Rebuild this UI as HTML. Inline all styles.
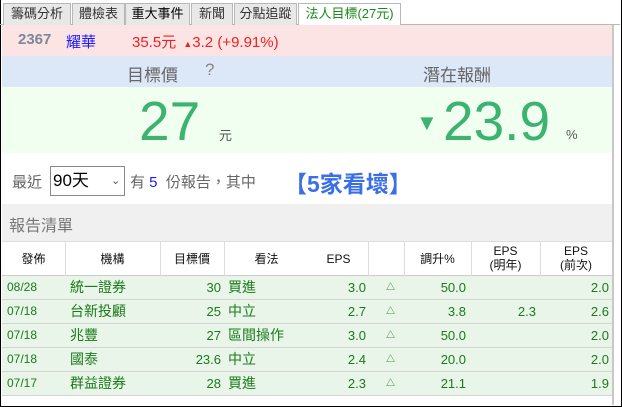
<!DOCTYPE html>
<html><head><meta charset="utf-8"><style>
*{margin:0;padding:0;box-sizing:border-box}
body{width:622px;height:407px;background:#fff;position:relative;overflow:hidden;font-family:"Liberation Sans","Noto Sans CJK TC",sans-serif}
.a{position:absolute;white-space:nowrap}
.tab{position:absolute;top:3px;height:22px;background:#e8e8e8;border:1px solid #b8b8b8;border-bottom:none;font-size:13px;color:#333;text-align:center;line-height:20px}
.r{position:absolute;left:2px;width:610px;height:24px;background:#eaf5ea;border-bottom:1px solid #d4d4d4;color:#1a7a1a}
.r span{position:absolute;top:0;line-height:23px;white-space:nowrap}
.d{font-size:12px;left:5px}
.n{font-size:13px;text-align:right}
.c{font-size:14px}
.h{position:absolute;font-size:12px;color:#111;text-align:center;line-height:14px}
.v{position:absolute;top:241px;width:1px;height:35px;background:#ddd}
</style></head><body>
<div class="a" style="left:0;top:0;width:622px;height:407px;border:1px solid #000;border-left:none;border-top:none"></div>
<div class="a" style="left:0;top:0;width:1px;height:407px;background:#000"></div>
<div class="a" style="left:612px;top:25px;width:2px;height:380px;background:#c8c8c8"></div>
<div class="a" style="left:0;top:24px;width:620px;height:1px;background:#b8b8b8"></div>
<div class="tab" style="left:3px;width:68px">籌碼分析</div>
<div class="tab" style="left:72px;width:53px">體檢表</div>
<div class="tab" style="left:125px;width:65px;color:#000">重大事件</div>
<div class="tab" style="left:191px;width:42px">新聞</div>
<div class="tab" style="left:234px;width:63px">分點追蹤</div>
<div class="tab" style="left:298px;width:103px;background:#fff;height:23px;color:#1a8a1a">法人目標(27元)</div>
<div class="a" style="left:2px;top:25px;width:610px;height:31px;background:#fde4e4"></div>
<div class="a" style="left:18px;top:31px;font-size:15px;color:#7a8898;font-weight:bold">2367</div>
<div class="a" style="left:66px;top:31px;font-size:15px;color:#1a1aff">耀華</div>
<div class="a" style="left:132px;top:31px;font-size:15px;color:#f02020">35.5元 <span style="font-size:9px;margin-left:3px">▲</span>3.2 (+9.91%)</div>
<div class="a" style="left:2px;top:56px;width:610px;height:31px;background:#dce8f8"></div>
<div class="a" style="left:127px;top:61px;font-size:17px;color:#666">目標價</div>
<div class="a" style="left:205px;top:60px;font-size:17px;color:#888">?</div>
<div class="a" style="left:423px;top:61px;font-size:17px;color:#666">潛在報酬</div>
<div class="a" style="left:2px;top:87px;width:610px;height:66px;background:#f0fff0"></div>
<div class="a" style="left:139px;top:89px;font-size:55px;color:#3cb371;line-height:64px">27</div>
<div class="a" style="left:219px;top:125px;font-size:13px;color:#555">元</div>
<div class="a" style="left:416px;top:112px;font-size:22px;color:#3cb371;line-height:22px">▼</div>
<div class="a" style="left:443px;top:89px;font-size:55px;color:#3cb371;line-height:64px">23.9</div>
<div class="a" style="left:566px;top:127px;font-size:13px;color:#555">%</div>
<div class="a" style="left:12px;top:171px;font-size:15px;color:#666">最近</div>
<div class="a" style="left:50px;top:166px;width:75px;height:30px;border:1px solid #888;background:#fff;font-size:17px;line-height:28px;padding-left:2px;color:#000">90天<span style="position:absolute;left:60px;top:0;font-size:11px;color:#555">⌄</span></div>
<div class="a" style="left:130px;top:171px;font-size:15px;color:#666">有 <span style="color:#1a1aff">5</span> &nbsp;份報告，其中</div>
<div class="a" style="left:284px;top:165px;font-size:23px;color:#3a6fe8;font-weight:bold">【5家看壞】</div>
<div class="a" style="left:2px;top:204px;width:610px;height:37px;background:#f0f0f0"></div>
<div class="a" style="left:9px;top:212px;font-size:16px;color:#777">報告清單</div>
<div class="a" style="left:2px;top:241px;width:610px;height:1px;background:#ddd"></div>
<div class="a" style="left:2px;top:275px;width:610px;height:1px;background:#ccc"></div>
<div class="v" style="left:65px"></div><div class="v" style="left:160px"></div><div class="v" style="left:224px"></div><div class="v" style="left:368px"></div><div class="v" style="left:404px"></div><div class="v" style="left:471px"></div><div class="v" style="left:540px"></div>
<div class="h" style="left:2px;width:63px;top:252px">發佈</div>
<div class="h" style="left:65px;width:95px;top:252px">機構</div>
<div class="h" style="left:160px;width:64px;top:252px">目標價</div>
<div class="h" style="left:224px;width:85px;top:252px">看法</div>
<div class="h" style="left:309px;width:59px;top:252px">EPS</div>
<div class="h" style="left:404px;width:67px;top:252px">調升%</div>
<div class="h" style="left:471px;width:69px;top:244px">EPS<br>(明年)</div>
<div class="h" style="left:540px;width:72px;top:244px">EPS<br>(前次)</div>
<div class="r" style="top:276px"><span class="d">08/28</span><span class="c" style="left:68px">統一證券</span><span class="n" style="right:391px">30</span><span class="c" style="left:226px">買進</span><span class="n" style="right:246px">3.0</span><span style="left:384px;font-size:9px">△</span><span class="n" style="right:146px">50.0</span><span class="n" style="right:3px">2.0</span></div>
<div class="r" style="top:300px"><span class="d">07/18</span><span class="c" style="left:68px">台新投顧</span><span class="n" style="right:391px">25</span><span class="c" style="left:226px">中立</span><span class="n" style="right:246px">2.7</span><span style="left:384px;font-size:9px">△</span><span class="n" style="right:146px">3.8</span><span class="n" style="right:76px">2.3</span><span class="n" style="right:3px">2.6</span></div>
<div class="r" style="top:324px"><span class="d">07/18</span><span class="c" style="left:68px">兆豐</span><span class="n" style="right:391px">27</span><span class="c" style="left:226px">區間操作</span><span class="n" style="right:246px">3.0</span><span style="left:384px;font-size:9px">△</span><span class="n" style="right:146px">50.0</span><span class="n" style="right:3px">2.0</span></div>
<div class="r" style="top:348px"><span class="d">07/18</span><span class="c" style="left:68px">國泰</span><span class="n" style="right:391px">23.6</span><span class="c" style="left:226px">中立</span><span class="n" style="right:246px">2.4</span><span style="left:384px;font-size:9px">△</span><span class="n" style="right:146px">20.0</span><span class="n" style="right:3px">2.0</span></div>
<div class="r" style="top:372px"><span class="d">07/17</span><span class="c" style="left:68px">群益證券</span><span class="n" style="right:391px">28</span><span class="c" style="left:226px">買進</span><span class="n" style="right:246px">2.3</span><span style="left:384px;font-size:9px">△</span><span class="n" style="right:146px">21.1</span><span class="n" style="right:3px">1.9</span></div>
</body></html>
